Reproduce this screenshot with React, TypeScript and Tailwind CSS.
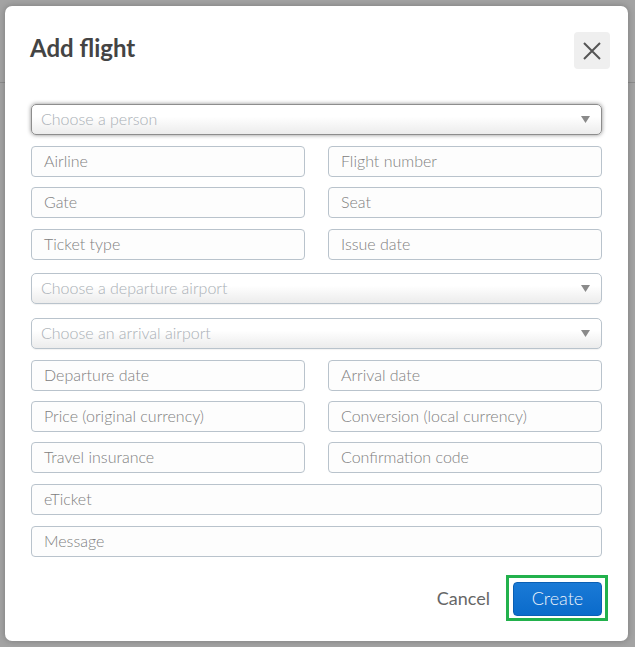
import React from 'react';

const font = { fontFamily: 'Lato, "Open Sans", sans-serif' };

function Field({ label, full = false }: { label: string; full?: boolean }) {
  return (
    <div
      className={`${full ? 'w-full' : 'w-[274px]'} h-[31px] border border-[#b9c3cc] rounded-[4px] bg-[#fdfdfd] flex items-center pl-[12px] pb-[2px] text-[16px] font-light text-[#808080]`}
    >
      {label}
    </div>
  );
}

function Select({ label, focused = false }: { label: string; focused?: boolean }) {
  return (
    <div
      className={`w-full h-[31px] rounded-[5px] border flex items-center justify-between pl-[9px] pr-[11px] text-[16px] font-light text-[#aab0b6] bg-gradient-to-b from-white from-40% to-[#ececec] ${
        focused
          ? 'border-[#8d8d8d] shadow-[0_0_4px_rgba(0,0,0,0.45)]'
          : 'border-[#b9c3cc] shadow-[0_1px_1px_rgba(0,0,0,0.05)]'
      }`}
    >
      <span className="pb-[2px]">{label}</span>
      <svg width="9" height="7" viewBox="0 0 9 7">
        <path d="M0 0h9L4.5 7z" fill="#8a8a8a" />
      </svg>
    </div>
  );
}

export default function App() {
  return (
    <div className="relative w-[635px] h-[647px] bg-[#a3a3a3] overflow-hidden" style={font}>
      {/* 背景里的页头分割线 */}
      <div className="h-[83px] border-b border-[#8c8c8c]"></div>

      {/* 对话框 */}
      <div className="absolute left-[5px] top-[6px] w-[623px] h-[635px] bg-white rounded-[7px] shadow-[0_0_6px_rgba(0,0,0,0.25)] flex flex-col">
        <div className="flex items-start justify-between pl-[25px] pr-[18px] pt-[26px]">
          <h1 className="text-[24px] font-bold text-[#444] leading-none mt-[4px]">Add flight</h1>
          <button className="w-[36px] h-[37px] rounded-[4px] bg-[#efefef] flex items-center justify-center">
            <svg width="20" height="20" viewBox="0 0 20 20">
              <path d="M2 2L18 18M18 2L2 18" stroke="#555" strokeWidth="2" />
            </svg>
          </button>
        </div>

        <div className="px-[26px] pt-[35px] flex flex-col">
          <Select label="Choose a person" focused />
          <div className="mt-[11px] flex justify-between">
            <Field label="Airline" />
            <Field label="Flight number" />
          </div>
          <div className="mt-[10px] flex justify-between">
            <Field label="Gate" />
            <Field label="Seat" />
          </div>
          <div className="mt-[11px] flex justify-between">
            <Field label="Ticket type" />
            <Field label="Issue date" />
          </div>
          <div className="mt-[13px]">
            <Select label="Choose a departure airport" />
          </div>
          <div className="mt-[14px]">
            <Select label="Choose an arrival airport" />
          </div>
          <div className="mt-[11px] flex justify-between">
            <Field label="Departure date" />
            <Field label="Arrival date" />
          </div>
          <div className="mt-[10px] flex justify-between">
            <Field label="Price (original currency)" />
            <Field label="Conversion (local currency)" />
          </div>
          <div className="mt-[10px] flex justify-between">
            <Field label="Travel insurance" />
            <Field label="Confirmation code" />
          </div>
          <div className="mt-[11px]">
            <Field label="eTicket" full />
          </div>
          <div className="mt-[11px]">
            <Field label="Message" full />
          </div>
        </div>

        <div className="mt-[18px] pr-[20px] flex items-center justify-end">
          <button className="text-[18px] text-[#666] mr-[16px]">Cancel</button>
          <div className="border-[3px] border-[#22b14c] pt-[4px] pl-[4px] pr-[3px] pb-[2px]">
            <button className="w-[89px] h-[34px] rounded-[4px] bg-gradient-to-b from-[#1a7ad6] to-[#0a6bcb] text-[#eef4fb] text-[18px] font-light border border-[#0a5fb4] pb-[1px]">
              Create
            </button>
          </div>
        </div>
      </div>
    </div>
  );
}
